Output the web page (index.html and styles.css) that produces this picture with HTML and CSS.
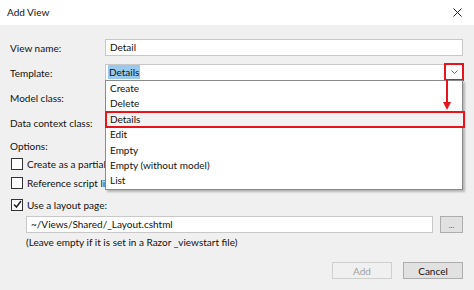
FILE: index.html
```html
<!DOCTYPE html>
<html lang="en">

<head>
    <meta charset="UTF-8">
    <meta name="viewport" content="width=device-width, initial-scale=1.0">
    <title>Add View</title>
    <link rel="stylesheet" href="styles.css">
</head>

<body>
    <div class="dialog">
        <header class="titlebar">
            <span class="title">Add View</span>
            <svg class="close" width="9" height="9" viewBox="0 0 9 9">
                <path d="M0.5 0.5L8.5 8.5M8.5 0.5L0.5 8.5" stroke="#222" stroke-width="1" fill="none" />
            </svg>
        </header>
        <main class="content">
            <div class="form">
                <label class="label">View name:</label>
                <div class="textbox">Detail</div>

                <label class="label">Template:</label>
                <div class="combo open">
                    <span class="selected">Details</span>
                    <span class="chevron">
                        <svg width="7" height="4" viewBox="0 0 7 4">
                            <path d="M0.5 0.5L3.5 3.5L6.5 0.5" stroke="#666" stroke-width="1" fill="none" />
                        </svg>
                    </span>
                    <svg class="arrow" width="10" height="31" viewBox="0 0 10 31">
                        <path d="M5 0V24" stroke="#e8141b" stroke-width="2" />
                        <path d="M1 22L5 30L9 22Z" fill="#e8141b" />
                    </svg>
                    <ul class="dropdown">
                        <li>Create</li>
                        <li>Delete</li>
                        <li class="marked">Details</li>
                        <li>Edit</li>
                        <li>Empty</li>
                        <li>Empty (without model)</li>
                        <li>List</li>
                    </ul>
                </div>

                <label class="label">Model class:</label>
                <div class="combo"></div>

                <label class="label">Data context class:</label>
                <div class="combo"></div>
            </div>

            <p class="options">Options:</p>
            <label class="check"><span class="box"></span>Create as a partial view</label>
            <label class="check"><span class="box"></span>Reference script libraries</label>
            <label class="check layout"><span class="box">
                    <svg width="9" height="9" viewBox="0 0 9 9">
                        <path d="M1 4.5L3.5 7L8 1" stroke="#222" stroke-width="1.5" fill="none" />
                    </svg>
                </span>Use a layout page:</label>

            <div class="layout-row">
                <div class="textbox">~/Views/Shared/_Layout.cshtml</div>
                <button class="browse">...</button>
            </div>
            <p class="hint">(Leave empty if it is set in a Razor _viewstart file)</p>

            <div class="actions">
                <button class="btn" disabled>Add</button>
                <button class="btn cancel">Cancel</button>
            </div>
        </main>
    </div>
</body>

</html>
```

FILE: styles.css
```css
body {
    margin: 0;
    font-family: 'Lato', 'Liberation Sans', sans-serif;
    font-size: 10px;
    color: #111;
    background-color: #f0f0f0;
}

.dialog {
    width: 474px;
    height: 290px;
    overflow: hidden;
}

.titlebar {
    height: 25px;
    box-sizing: border-box;
    background-color: #fff;
    display: flex;
    align-items: center;
    justify-content: space-between;
    padding: 0 12px 0 7px;
}

.title {
    margin-top: -1px;
}

.content {
    padding: 14px 11px 0 10px;
}

.form {
    display: grid;
    grid-template-columns: 95px 1fr;
    grid-auto-rows: 17px;
    row-gap: 8px;
    align-items: center;
    white-space: nowrap;
}

.textbox {
    height: 17px;
    box-sizing: border-box;
    background-color: #fff;
    border: 1px solid #c8c8c8;
    padding-left: 4px;
    line-height: 15px;
}

.combo {
    position: relative;
    height: 17px;
    box-sizing: border-box;
    background-color: #fff;
    border: 1px solid #c8c8c8;
    border-bottom-color: #9a9a9a;
    padding-left: 2px;
    line-height: 15px;
}

.selected {
    background-color: #99c9ef;
    padding: 1px 1px;
}

.chevron {
    position: absolute;
    top: -2px;
    right: -2px;
    width: 16px;
    height: 14px;
    border: 2px solid #e8141b;
    display: flex;
    align-items: center;
    justify-content: center;
}

.arrow {
    position: absolute;
    top: 15px;
    right: 10px;
    z-index: 3;
}

.dropdown {
    position: absolute;
    top: 15px;
    left: -1px;
    right: -1px;
    margin: 0;
    padding: 0;
    list-style: none;
    background-color: #fff;
    border: 1px solid #8a8a8a;
    box-shadow: 2px 2px 2px rgba(0, 0, 0, 0.25);
    z-index: 2;
}

.dropdown li {
    height: 15.4px;
    line-height: 15px;
    padding-left: 4px;
}

.dropdown li.marked {
    background-color: #f2f2f2;
    outline: 2px solid #e8141b;
    outline-offset: -1px;
    margin-right: -2px;
}

.options {
    margin: 8px 0 0;
    line-height: 15px;
}

.check {
    display: flex;
    align-items: center;
    height: 19px;
    white-space: nowrap;
}

.check.layout {
    margin-top: 3px;
}

.box {
    width: 10px;
    height: 10px;
    border: 1px solid #333;
    background-color: #fff;
    margin: 0 4px 0 1px;
    display: flex;
    align-items: center;
    justify-content: center;
}

.layout-row {
    display: flex;
    gap: 7px;
    margin: 2px 0 0 16px;
}

.layout-row .textbox {
    flex: 1;
}

.browse {
    width: 23px;
    height: 17px;
    padding: 0;
    background-color: #e1e1e1;
    border: 1px solid #adadad;
    color: #555;
    font-size: 8px;
    font-family: inherit;
}

.hint {
    margin: 2px 0 0 16px;
    line-height: 15px;
}

.actions {
    display: flex;
    justify-content: flex-end;
    gap: 11px;
    margin-top: 12px;
}

.btn {
    width: 60px;
    height: 17px;
    padding: 0;
    font-family: inherit;
    font-size: 10px;
    line-height: 14px;
    background-color: #e1e1e1;
    border: 1px solid #adadad;
    color: #111;
}

.btn:disabled {
    background-color: #f0f0f0;
    border-color: #cfcfcf;
    color: #a0a0a0;
}
```
